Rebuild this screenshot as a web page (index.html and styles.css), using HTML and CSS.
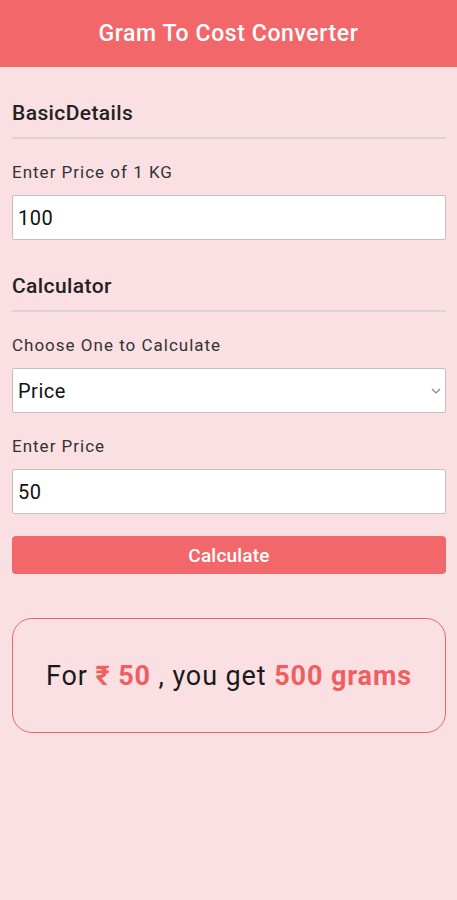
FILE: index.html
```html
<!DOCTYPE html>
<html lang="en">
<head>
    <meta charset="UTF-8">
    <title>Gram To Cost Converter</title>
    <link rel="stylesheet" href="styles.css">
</head>
<body>
    <header class="app-bar">Gram To Cost Converter</header>

    <main class="content">
        <h2 class="section-title">BasicDetails</h2>
        <label class="field-label" for="kg-price">Enter Price of 1 KG</label>
        <input class="field" id="kg-price" type="text" value="100">

        <h2 class="section-title calc-title">Calculator</h2>
        <label class="field-label" for="mode">Choose One to Calculate</label>
        <div class="select-wrap">
            <select class="field select" id="mode">
                <option>Price</option>
                <option>Grams</option>
            </select>
            <svg class="chevron" width="10" height="6" viewBox="0 0 10 6">
                <path d="M1 1 L5 5 L9 1" fill="none" stroke="#888" stroke-width="1.2"/>
            </svg>
        </div>

        <label class="field-label" for="amount">Enter Price</label>
        <input class="field" id="amount" type="text" value="50">

        <button class="calc-btn" id="calc-btn">Calculate</button>

        <div class="result">
            <p class="result-text" id="result">For <b>₹ 50</b> , you get <b>500 grams</b></p>
        </div>
    </main>

    <script>
        function calc() {
            var kg = parseFloat(document.getElementById('kg-price').value);
            var amount = parseFloat(document.getElementById('amount').value);
            var mode = document.getElementById('mode').value;
            var out = document.getElementById('result');
            if (mode == 'Price') {
                var grams = Math.round(amount / kg * 1000);
                out.innerHTML = 'For <b>₹ ' + amount + '</b> , you get <b>' + grams + ' grams</b>';
            } else {
                var cost = (amount * kg / 1000);
                out.innerHTML = 'For <b>' + amount + ' grams</b> , you pay <b>₹ ' + cost + '</b>';
            }
        }

        document.getElementById('calc-btn').onclick = function () {
            calc();
        }
    </script>
</body>
</html>
```

FILE: styles.css
```css
body{
    margin: 0;
    background: #fae0e3;
    font-family: Roboto, "Liberation Sans", sans-serif;
    color: #222;
}

.app-bar{
    height: 67px;
    line-height: 67px;
    background: #f2686a;
    color: #fff;
    text-align: center;
    font-size: 23px;
    font-weight: 500;
    letter-spacing: 0.6px;
}

.content{
    display: flex;
    flex-direction: column;
    padding: 34px 11px 0 12px;
}

.section-title{
    margin: 0;
    padding-bottom: 12px;
    border-bottom: 2px solid #ddd3d5;
    font-size: 21px;
    font-weight: 500;
    letter-spacing: 0.4px;
    color: #222;
}

.calc-title{
    margin-top: 34px;
}

.field-label{
    margin: 23px 0 13px;
    font-size: 17px;
    letter-spacing: 1px;
    color: #333;
}

.field{
    box-sizing: border-box;
    width: 100%;
    height: 45px;
    margin: 0;
    padding: 0 5px;
    border: 1px solid #c4c0c0;
    border-radius: 2px;
    background: #fff;
    font-family: inherit;
    font-size: 20px;
    letter-spacing: 0.5px;
    color: #111;
    outline: none;
}

.select-wrap{
    position: relative;
}

.select{
    appearance: none;
    -webkit-appearance: none;
}

.chevron{
    position: absolute;
    right: 5px;
    top: 20px;
}

.calc-btn{
    height: 38px;
    margin-top: 22px;
    border: none;
    border-radius: 4px;
    background: #f2686a;
    color: #fff;
    font-family: inherit;
    font-size: 19px;
    font-weight: 500;
    letter-spacing: 0.2px;
}

.result{
    box-sizing: border-box;
    height: 115px;
    margin-top: 44px;
    display: flex;
    align-items: center;
    justify-content: center;
    border: 1.5px solid #e8686a;
    border-radius: 20px;
}

.result-text{
    margin: 0;
    font-size: 27px;
    letter-spacing: 0.9px;
    color: #1a1a1a;
}

.result-text b{
    color: #ef5f61;
    font-weight: 700;
}
```
